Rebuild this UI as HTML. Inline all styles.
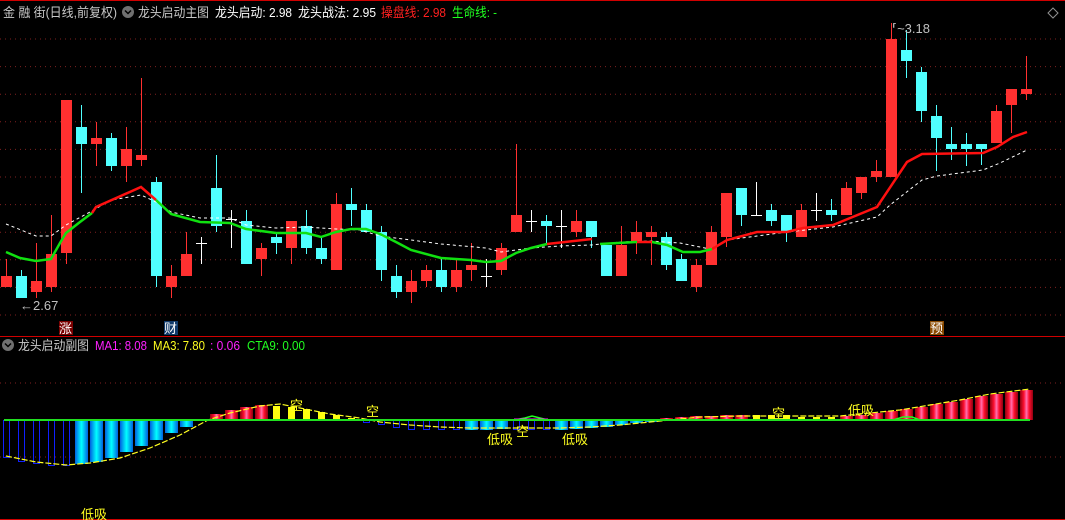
<!DOCTYPE html>
<html><head><meta charset="utf-8"><style>
html,body{margin:0;padding:0;background:#000;width:1065px;height:520px;overflow:hidden}
svg{display:block}
text{font-family:"Liberation Sans","WenQuanYi Zen Hei","Noto Sans CJK SC",sans-serif;font-size:13px}
</style></head><body>
<svg id="s" width="1065" height="520" xmlns="http://www.w3.org/2000/svg">
<defs>
<linearGradient id="cy" x1="0" x2="1" y1="0" y2="0"><stop offset="0" stop-color="#0060e0"/><stop offset="0.5" stop-color="#00ffff"/><stop offset="1" stop-color="#0060e0"/></linearGradient>
<linearGradient id="rd" x1="0" x2="1" y1="0" y2="0"><stop offset="0" stop-color="#900010"/><stop offset="0.3" stop-color="#ff1030"/><stop offset="0.5" stop-color="#ff70b0"/><stop offset="0.7" stop-color="#ff1030"/><stop offset="1" stop-color="#900010"/></linearGradient>
</defs>
<g id="g"></g>
<line x1="0" y1="0.5" x2="1065" y2="0.5" stroke="#d00000"/>
<line x1="0" y1="336.5" x2="1065" y2="336.5" stroke="#d00000"/>
<line x1="0" y1="519.5" x2="1065" y2="519.5" stroke="#d00000"/>
<g lengthAdjust="spacingAndGlyphs">
<text x="3" y="17" fill="#c8c8c8" textLength="114" lengthAdjust="spacingAndGlyphs">金 融 街(日线,前复权)</text>
<text x="138" y="17" fill="#c8c8c8" textLength="71" lengthAdjust="spacingAndGlyphs">龙头启动主图</text>
<text x="215" y="17" fill="#fff" textLength="77" lengthAdjust="spacingAndGlyphs">龙头启动: 2.98</text>
<text x="298" y="17" fill="#fff" textLength="78" lengthAdjust="spacingAndGlyphs">龙头战法: 2.95</text>
<text x="381" y="17" fill="#ff2020" textLength="65" lengthAdjust="spacingAndGlyphs">操盘线: 2.98</text>
<text x="452" y="17" fill="#20ff20" textLength="45" lengthAdjust="spacingAndGlyphs">生命线: -</text>
<text x="18" y="350" fill="#c8c8c8" textLength="71" lengthAdjust="spacingAndGlyphs">龙头启动副图</text>
<text x="95" y="350" fill="#ff20ff" textLength="52" lengthAdjust="spacingAndGlyphs">MA1: 8.08</text>
<text x="153" y="350" fill="#ffff20" textLength="52" lengthAdjust="spacingAndGlyphs">MA3: 7.80</text>
<text x="210" y="350" fill="#ff20ff" textLength="30" lengthAdjust="spacingAndGlyphs">: 0.06</text>
<text x="247" y="350" fill="#20ff20" textLength="58" lengthAdjust="spacingAndGlyphs">CTA9: 0.00</text>
</g>
<circle cx="128" cy="12" r="6" fill="#707070"/><path d="M125 10.5 L128 13.5 L131 10.5" stroke="#000" stroke-width="1.5" fill="none"/>
<path d="M1053 8 L1058 13 L1053 18 L1048 13 Z" stroke="#909090" fill="none"/>
<circle cx="8" cy="345" r="6" fill="#707070"/><path d="M5 343.5 L8 346.5 L11 343.5" stroke="#000" stroke-width="1.5" fill="none"/>
<rect x="59" y="321" width="14" height="14" fill="#7a0000"/><text x="59" y="333" fill="#fff">涨</text>
<rect x="164" y="321" width="14" height="14" fill="#103a6a"/><text x="164" y="333" fill="#fff">财</text>
<rect x="930" y="321" width="14" height="14" fill="#8a4a00"/><text x="930" y="333" fill="#fff">预</text>
<text x="20" y="310" fill="#c0c0c0" font-size="13">←2.67</text>
<text x="892" y="33" fill="#c0c0c0" font-size="13">⸢~3.18</text>
<g fill="#ffff20" font-size="12">
<text x="290" y="410">空</text><text x="366" y="416">空</text><text x="487" y="444">低吸</text><text x="516" y="436">空</text>
<text x="562" y="444">低吸</text><text x="772" y="418">空</text><text x="848" y="415">低吸</text><text x="81" y="519">低吸</text>
</g>
</svg>
<script>
var g=document.getElementById('g'),h='';
for(var k=0;k<11;k++){var y=39+27.6*k;h+='<line x1="0" x2="1065" y1="'+y.toFixed(1)+'" y2="'+y.toFixed(1)+'" stroke="#802020" stroke-dasharray="1 4"/>';}
[383,457].forEach(function(y){h+='<line x1="0" x2="1065" y1="'+y+'" y2="'+y+'" stroke="#802020" stroke-dasharray="1 4"/>';});
var C=[[276,287,259,287,'r'],[276,298,270,298,'c'],[281,292,243,298,'r'],[254,287,215,292,'r'],[100,253,100,264,'r'],
[127,144,105,193,'c'],[138,144,122,166,'r'],[138,166,133,171,'c'],[149,166,127,182,'r'],[155,160,78,166,'r'],
[182,276,177,287,'c'],[276,287,265,298,'r'],[254,276,232,276,'r'],[243,243,237,264,'w'],[188,226,155,232,'c'],
[219,219,210,248,'w'],[221,264,210,264,'c'],[248,259,243,276,'r'],[237,243,232,254,'c'],[221,248,221,264,'r'],
[226,248,210,254,'c'],[248,259,237,264,'c'],[204,270,193,270,'r'],[204,210,188,226,'c'],[210,232,204,232,'c'],
[232,270,226,281,'c'],[276,292,265,298,'c'],[281,292,270,303,'r'],[270,281,265,287,'r'],[270,287,259,292,'c'],
[270,287,259,292,'r'],[265,270,243,281,'r'],[276,276,259,287,'w'],[248,270,243,275,'r'],[215,232,144,232,'r'],
[221,221,210,232,'w'],[221,226,215,243,'c'],[226,226,210,248,'w'],[221,232,210,237,'r'],[221,237,221,248,'c'],
[245,276,245,276,'c'],[245,276,226,276,'r'],[232,243,221,254,'r'],[232,237,226,265,'r'],[237,265,232,270,'c'],
[259,281,254,281,'c'],[265,287,259,292,'r'],[232,265,226,265,'r'],[193,237,193,247,'r'],[188,215,188,226,'c'],
[215,215,182,215,'w'],[210,221,204,226,'c'],[215,232,215,242,'c'],[210,237,204,237,'r'],[210,210,193,221,'w'],
[210,215,199,221,'c'],[188,215,182,215,'r'],[177,193,177,199,'r'],[171,177,160,182,'r'],[39,177,23,177,'r'],
[50,61,30,78,'c'],[72,111,67,122,'c'],[116,138,105,171,'c'],[144,149,127,160,'c'],[144,149,133,166,'c'],
[144,149,144,165,'c'],[111,143,105,143,'r'],[89,105,89,133,'r'],[89,94,56,100,'r']];
var col={r:'#ff3030',c:'#50ffff',w:'#ffffff'};
C.forEach(function(c,i){var x=6+15*i,k=col[c[4]];
 h+='<line x1="'+(x+.5)+'" x2="'+(x+.5)+'" y1="'+c[2]+'" y2="'+c[3]+'" stroke="'+k+'"/>';
 if(c[4]=='w')h+='<line x1="'+(x-5)+'" x2="'+(x+6)+'" y1="'+(c[0]+.5)+'" y2="'+(c[0]+.5)+'" stroke="#fff"/>';
 else h+='<rect x="'+(x-5)+'" y="'+c[0]+'" width="11" height="'+Math.max(2,c[1]-c[0])+'" fill="'+k+'"/>';
});
function pl(p,st,w,d){h+='<polyline points="'+p+'" fill="none" stroke="'+st+'" stroke-width="'+w+'"'+(d?' stroke-dasharray="'+d+'"':'')+'/>';}
pl('6,224 36,236 51,236 66,225 90,212 111,200 141,195 156,202 171,212 200,218 230,218 246,225 276,228 306,227 336,229 360,230 380,236 411,240 441,244 486,248 501,252 531,248 560,246 591,245 621,242 650,241 680,243 710,249 727,240 757,236 787,232 833,227 877,217 890,205 922,180 937,176 983,170 1000,163 1027,150','#fff',1,'3 3');
pl('6,252 20,258 36,261 51,259 60,243 66,233 80,222 92,213','#10e010',2.5);
pl('92,213 96,207 141,187 156,200','#ff1010',2.5);
pl('156,200 171,214 200,222 230,223 246,229 276,233 306,233 321,237 336,232 351,229 366,229 380,234 396,242 411,250 441,258 471,260 486,262 501,261 516,253 531,248 547,244','#10e010',2.5);
pl('547,244 592,239','#ff1010',2.5);
pl('600,244 637,242','#10e010',2.5);pl('637,242 652,242','#ff1010',2.5);
pl('652,242 667,245 683,252 700,252 712,249','#10e010',2.5);
pl('712,249 727,240 757,232 787,232 803,228 833,225 877,207 907,162 922,154 983,153 997,147 1013,137 1027,132','#ff1010',2.5);
var Z=420;
[457,461,463,465,465].forEach(function(b,i){var x=6+15*i;h+='<rect x="'+(x-3)+'.5" y="'+Z+'.5" width="6" height="'+(b-Z)+'" fill="none" stroke="#1020ff"/>';});
[464,462,458,452,446,440,433,427].forEach(function(b,i){var x=6+15*(i+5);h+='<rect x="'+(x-6)+'" y="'+Z+'" width="13" height="'+(b-Z)+'" fill="url(#cy)"/>';});
function red(i,t){var x=6+15*i;h+='<rect x="'+(x-6)+'" y="'+t+'" width="13" height="'+(Z-t)+'" fill="url(#rd)"/>';}
function yel(i,t){var x=6+15*i;h+='<rect x="'+(x-3)+'" y="'+t+'" width="7" height="'+(Z-t)+'" fill="#ffff10"/>';}
function blu(i,b){var x=6+15*i;h+='<rect x="'+(x-3)+'.5" y="'+Z+'.5" width="6" height="'+(b-Z)+'" fill="none" stroke="#1020ff"/>';}
function cya(i,b){var x=6+15*i;h+='<rect x="'+(x-6)+'" y="'+Z+'" width="13" height="'+(b-Z)+'" fill="url(#cy)"/>';}
red(14,414);red(15,410);red(16,407);red(17,405);
[[18,406],[19,407],[20,409],[21,412],[22,415],[23,418]].forEach(function(a){yel(a[0],a[1]);});
[[24,422],[25,424],[26,427],[27,429],[28,429],[29,429],[30,429]].forEach(function(a){blu(a[0],a[1]);});
cya(31,430);cya(32,430);cya(33,429);blu(34,429);blu(35,429);blu(36,429);
[[37,430],[38,429],[39,428],[40,427],[41,425],[42,423],[43,422]].forEach(function(a){cya(a[0],a[1]);});
[[44,418],[45,417],[46,416],[47,416],[48,415],[49,415],[56,416],[57,415],[58,413],[59,411],[60,409],[61,407],[62,404],[63,402],[64,399],[65,396],[66,394],[67,392],[68,390]].forEach(function(a){red(a[0],a[1]);});
[[50,415],[51,415],[52,415],[53,417],[54,417],[55,417]].forEach(function(a){yel(a[0],a[1]);});
pl('6,456 36,462 66,465 90,463 120,458 150,448 180,435 208,420 230,413 260,406 280,404 300,408 330,414 360,418 380,422 410,425 440,427 470,428 500,428 530,428 560,428 590,427 620,425 650,422 680,419 700,417 740,416 800,416 840,416 870,413 900,410 930,405 960,400 990,394 1030,389','#ffff20',1.2,'6 2');
pl('514,420 525,418 532,416 540,418 548,420','#20ff20',1.5);
pl('893,420 903,417 912,417 920,420','#20ff20',1.5);
h+='<line x1="514" x2="548" y1="419" y2="419" stroke="#ff20ff"/>';
h+='<line x1="4" x2="1030" y1="420" y2="420" stroke="#20e020" stroke-width="2"/>';
g.innerHTML=h;
</script>
</body></html>
